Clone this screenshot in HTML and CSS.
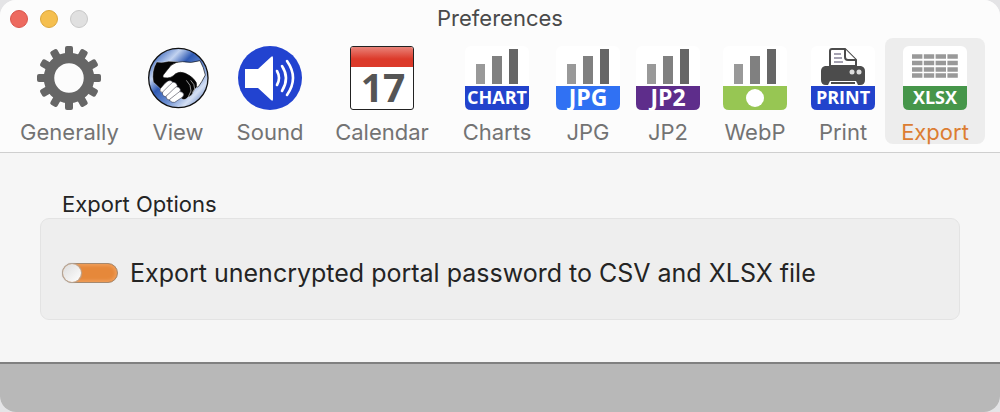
FILE: index.html
```html
<!DOCTYPE html>
<html lang="en">
<head>
  <meta charset="UTF-8">
  <meta name="viewport" content="width=device-width, initial-scale=1">
  <title>Preferences</title>
  <link rel="stylesheet" href="styles.css">
</head>
<body>
  <div class="window">
    <header class="header">
      <div class="titlebar">
        <div class="lights">
          <button class="light close" aria-label="Close"></button>
          <button class="light minimize" aria-label="Minimize"></button>
          <button class="light zoom" aria-label="Zoom" disabled></button>
        </div>
        <h1>Preferences</h1>
      </div>

      <nav class="toolbar">
        <button class="tab">
          <svg viewBox="0 0 64 64" aria-hidden="true">
            <defs>
              <rect id="tooth" x="28" y="0" width="8" height="14" rx="2"/>
            </defs>
            <g fill="#666">
              <use href="#tooth"/>
              <use href="#tooth" transform="rotate(30 32 32)"/>
              <use href="#tooth" transform="rotate(60 32 32)"/>
              <use href="#tooth" transform="rotate(90 32 32)"/>
              <use href="#tooth" transform="rotate(120 32 32)"/>
              <use href="#tooth" transform="rotate(150 32 32)"/>
              <use href="#tooth" transform="rotate(180 32 32)"/>
              <use href="#tooth" transform="rotate(210 32 32)"/>
              <use href="#tooth" transform="rotate(240 32 32)"/>
              <use href="#tooth" transform="rotate(270 32 32)"/>
              <use href="#tooth" transform="rotate(300 32 32)"/>
              <use href="#tooth" transform="rotate(330 32 32)"/>
            </g>
            <circle cx="32" cy="32" r="20" fill="none" stroke="#666" stroke-width="10.5"/>
          </svg>
          <span>Generally</span>
        </button>

        <button class="tab">
          <svg viewBox="48 18 192 192" aria-hidden="true">
            <defs>
              <linearGradient id="sky" x1="0" y1="0" x2="1" y2="1">
                <stop offset="0" stop-color="#16409c"/>
                <stop offset=".1" stop-color="#3d68bd"/>
                <stop offset=".28" stop-color="#c2d3f0"/>
                <stop offset=".42" stop-color="#2f5ab4"/>
                <stop offset=".62" stop-color="#6f92d3"/>
                <stop offset=".78" stop-color="#d5e0f4"/>
                <stop offset="1" stop-color="#2450a8"/>
              </linearGradient>
            </defs>
            <circle cx="145" cy="114" r="89" fill="url(#sky)" stroke="#111" stroke-width="4"/>
            <path d="M80 66Q98 69 116 64L144 65L160 91Q186 96 196 119Q210 136 197 145L190 156Q184 170 174 171Q163 184 154 175L96 151L70 126Q64 93 80 66Z" fill="#050505" stroke="#fff" stroke-width="1"/>
            <path d="M210 62Q221 81 226 105Q215 127 206 139Q202 143 199 139Q203 128 190 116Q181 107 166 100Q150 93 137 101Q123 117 103 113Q95 111 102 102L123 76Q138 64 158 65Q183 71 210 62Z" fill="#fff" stroke="#111" stroke-width="2"/>
            <g fill="#fff" stroke="#223" stroke-width="1.5">
              <path d="M91 146Q86 155 98 158L126 139Q134 128 123 122Q115 119 105 130Z"/>
              <path d="M98 156Q95 168 107 170L139 145Q146 135 136 128Q128 123 121 133Z"/>
              <path d="M108 169Q108 180 119 180L149 158Q155 148 146 142Q138 137 132 146Z"/>
              <path d="M119 178Q120 188 134 187L158 171Q165 163 157 157Q149 151 142 160Z"/>
            </g>
            <path d="M169 121Q184 135 183 153L175 170M182 121Q195 133 194 147L187 158" fill="none" stroke="#ddd" stroke-width="2"/>
          </svg>
          <span>View</span>
        </button>

        <button class="tab">
          <svg viewBox="0 0 64 64" aria-hidden="true">
            <circle cx="32" cy="32" r="32" fill="#2243d0"/>
            <path d="M7 23H20L33 11Q35 9 35 12V53Q35 56 33 54L20 42H7Z" fill="#fff"/>
            <g fill="none" stroke="#fff" stroke-width="2.6" stroke-linecap="round">
              <path d="M39 25Q43 32 39 39"/>
              <path d="M44 20Q52 32 44 45"/>
              <path d="M49 15Q61 32 49 49"/>
            </g>
          </svg>
          <span>Sound</span>
        </button>

        <button class="tab">
          <svg viewBox="0 0 64 64" aria-hidden="true">
            <defs>
              <linearGradient id="red" x1="0" y1="0" x2="0" y2="1">
                <stop offset="0" stop-color="#e98379"/>
                <stop offset=".6" stop-color="#dc3a2a"/>
              </linearGradient>
            </defs>
            <rect x=".5" y=".5" width="63" height="63" rx="2.5" fill="#fff" stroke="#222"/>
            <path d="M1 21V3Q1 1 3 1H61Q63 1 63 3V21Z" fill="url(#red)"/>
            <text class="day" x="33" y="56" text-anchor="middle">17</text>
          </svg>
          <span>Calendar</span>
        </button>

        <button class="tab">
          <svg viewBox="0 0 64 64" aria-hidden="true">
            <defs>
              <g id="bars">
                <rect width="64" height="64" rx="6" fill="#fff"/>
                <rect x="11" y="18" width="9" height="20" fill="#999"/>
                <rect x="27" y="10" width="10" height="28" fill="#808080"/>
                <rect x="44" y="3" width="9" height="35" fill="#666"/>
              </g>
              <path id="band" d="M0 40H64V58Q64 64 58 64H6Q0 64 0 58Z"/>
            </defs>
            <use href="#bars"/>
            <use href="#band" fill="#2243cc"/>
            <text class="badge" x="32" y="58" text-anchor="middle">CHART</text>
          </svg>
          <span>Charts</span>
        </button>

        <button class="tab">
          <svg viewBox="0 0 64 64" aria-hidden="true">
            <use href="#bars"/>
            <use href="#band" fill="#3071f3"/>
            <text class="badge large" x="32" y="60" text-anchor="middle">JPG</text>
          </svg>
          <span>JPG</span>
        </button>

        <button class="tab">
          <svg viewBox="0 0 64 64" aria-hidden="true">
            <use href="#bars"/>
            <use href="#band" fill="#5e2d8b"/>
            <text class="badge large" x="32" y="60" text-anchor="middle">JP2</text>
          </svg>
          <span>JP2</span>
        </button>

        <button class="tab">
          <svg viewBox="0 0 64 64" aria-hidden="true">
            <use href="#bars"/>
            <use href="#band" fill="#97c653"/>
            <circle cx="32" cy="52" r="9" fill="#fff"/>
          </svg>
          <span>WebP</span>
        </button>

        <button class="tab">
          <svg viewBox="0 0 64 64" aria-hidden="true">
            <rect width="64" height="64" rx="6" fill="#fff"/>
            <path d="M14 20H50Q54 21 54 25V34Q54 39 49 39H47L45 35H19L17 39H15Q10 39 10 34V25Q10 21 14 20Z" fill="#4c4c4c"/>
            <path d="M19 20V5Q19 3 21 3H34L45 14V20Z" fill="#fff" stroke="#4c4c4c" stroke-width="2"/>
            <path d="M34 3V11Q34 14 37 14H45" fill="#fff" stroke="#4c4c4c" stroke-width="2"/>
            <path d="M23 8H30M23 12H31M23 16H32" stroke="#888499" stroke-width="1.6"/>
            <path d="M20 37H44" stroke="#4c4c4c" stroke-width="2"/>
            <circle cx="41" cy="26" r="2.5" fill="#ddd"/>
            <circle cx="48" cy="26" r="2.5" fill="#ddd"/>
            <use href="#band" fill="#2243cc"/>
            <text class="badge" x="32" y="58" text-anchor="middle">PRINT</text>
          </svg>
          <span>Print</span>
        </button>

        <button class="tab active" aria-current="page">
          <svg viewBox="0 0 64 64" aria-hidden="true">
            <rect width="64" height="64" rx="6" fill="#fff"/>
            <g stroke="#999" stroke-width="4.6" stroke-dasharray="10.4 1.4">
              <path d="M9 10.5H55"/>
              <path d="M9 17H55"/>
              <path d="M9 23.5H55"/>
              <path d="M9 29.5H55"/>
            </g>
            <use href="#band" fill="#46964a"/>
            <text class="badge" x="32" y="58" text-anchor="middle">XLSX</text>
          </svg>
          <span>Export</span>
        </button>
      </nav>
    </header>

    <main class="content">
      <h2>Export Options</h2>
      <div class="panel">
        <label class="option">
          <input type="checkbox" class="switch">
          <span>Export unencrypted portal password to CSV and XLSX file</span>
        </label>
      </div>
    </main>

    <footer class="footer"></footer>
  </div>
</body>
</html>
```
FILE: styles.css
```css
* {
  box-sizing: border-box;
}

body {
  margin: 0;
  background-color: #e4e4e6;
  font-family: Inter, "Liberation Sans", sans-serif;
  color: #242424;
}

h1, h2 {
  margin: 0;
  font-weight: 400;
}

button {
  padding: 0;
  border: none;
  background: none;
  font-family: inherit;
}

.window {
  display: flex;
  flex-direction: column;
  min-height: 100vh;
  background-color: #f6f6f6;
  border-radius: 16px;
  overflow: hidden;
}

.header {
  background-color: #fcfcfc;
  border-bottom: 1px solid #cfcfcf;
  padding-bottom: 8px;
}

/* Title bar */
.titlebar {
  display: grid;
  grid-template-columns: 1fr auto 1fr;
  align-items: center;
  height: 38px;
  padding: 0 10px;
}

.titlebar h1 {
  font-size: 22px;
  line-height: 26px;
  padding-bottom: 2px;
  color: #4a4a4a;
}

.lights {
  display: flex;
  gap: 12px;
}

.light {
  width: 18px;
  height: 18px;
  border-radius: 50%;
  border: 1px solid #d9554c;
  background-color: #ed6a5f;
}

.light.minimize {
  border-color: #dba63c;
  background-color: #f5bf4f;
}

.light.zoom {
  border-color: #c8c8c8;
  background-color: #e0e0e0;
}

/* Tabs */
.toolbar {
  display: grid;
  grid-template-columns: 115fr 102fr 82fr 142fr 88fr 94fr 66fr 108fr 68fr 116fr;
  justify-items: center;
  padding: 0 7px 0 12px;
}

.tab {
  display: flex;
  flex-direction: column;
  align-items: center;
  gap: 8px;
  height: 106px;
  padding-top: 8px;
  border-radius: 8px;
  font-size: 22px;
  line-height: 28px;
  color: #737373;
}

.tab svg {
  flex: none;
  width: 64px;
  height: 64px;
  overflow: visible;
}

.tab.active {
  padding-left: 16px;
  padding-right: 16px;
  background-color: #ededed;
  color: #dc7d32;
}

.day {
  font: bold 39px "Open Sans", sans-serif;
  fill: #555;
}

.badge {
  font: bold 18px "Open Sans", sans-serif;
  fill: #fff;
}

.badge.large {
  font-size: 23px;
}

/* Content */
.content {
  flex: 1;
  padding: 38px 40px 42px;
}

.content h2 {
  padding-left: 22px;
  font-size: 22px;
  line-height: 27px;
}

.panel {
  padding: 40px 21px 32px;
  background-color: #eee;
  border: 1px solid #e3e3e3;
  border-radius: 9px;
}

.option {
  display: flex;
  align-items: center;
  gap: 12px;
  font-size: 25px;
  line-height: 28px;
}

.switch {
  appearance: none;
  flex: none;
  width: 56px;
  height: 20px;
  margin: 0;
  border: 1px solid #a5896f;
  border-radius: 10px;
  background-color: #e6883a;
  box-shadow: inset 0 0 3px 2px #ee9c58;
}

.switch::before {
  content: "";
  display: block;
  width: 18px;
  height: 18px;
  border-radius: 50%;
  background: linear-gradient(135deg, #dcdcdc, #fff);
  box-shadow: 0 0 1px 1px #b5aaa0;
}

.switch:checked::before {
  margin-left: auto;
}

.footer {
  height: 50px;
  background-color: #b8b8b8;
  border-top: 2px solid #808080;
}
```
